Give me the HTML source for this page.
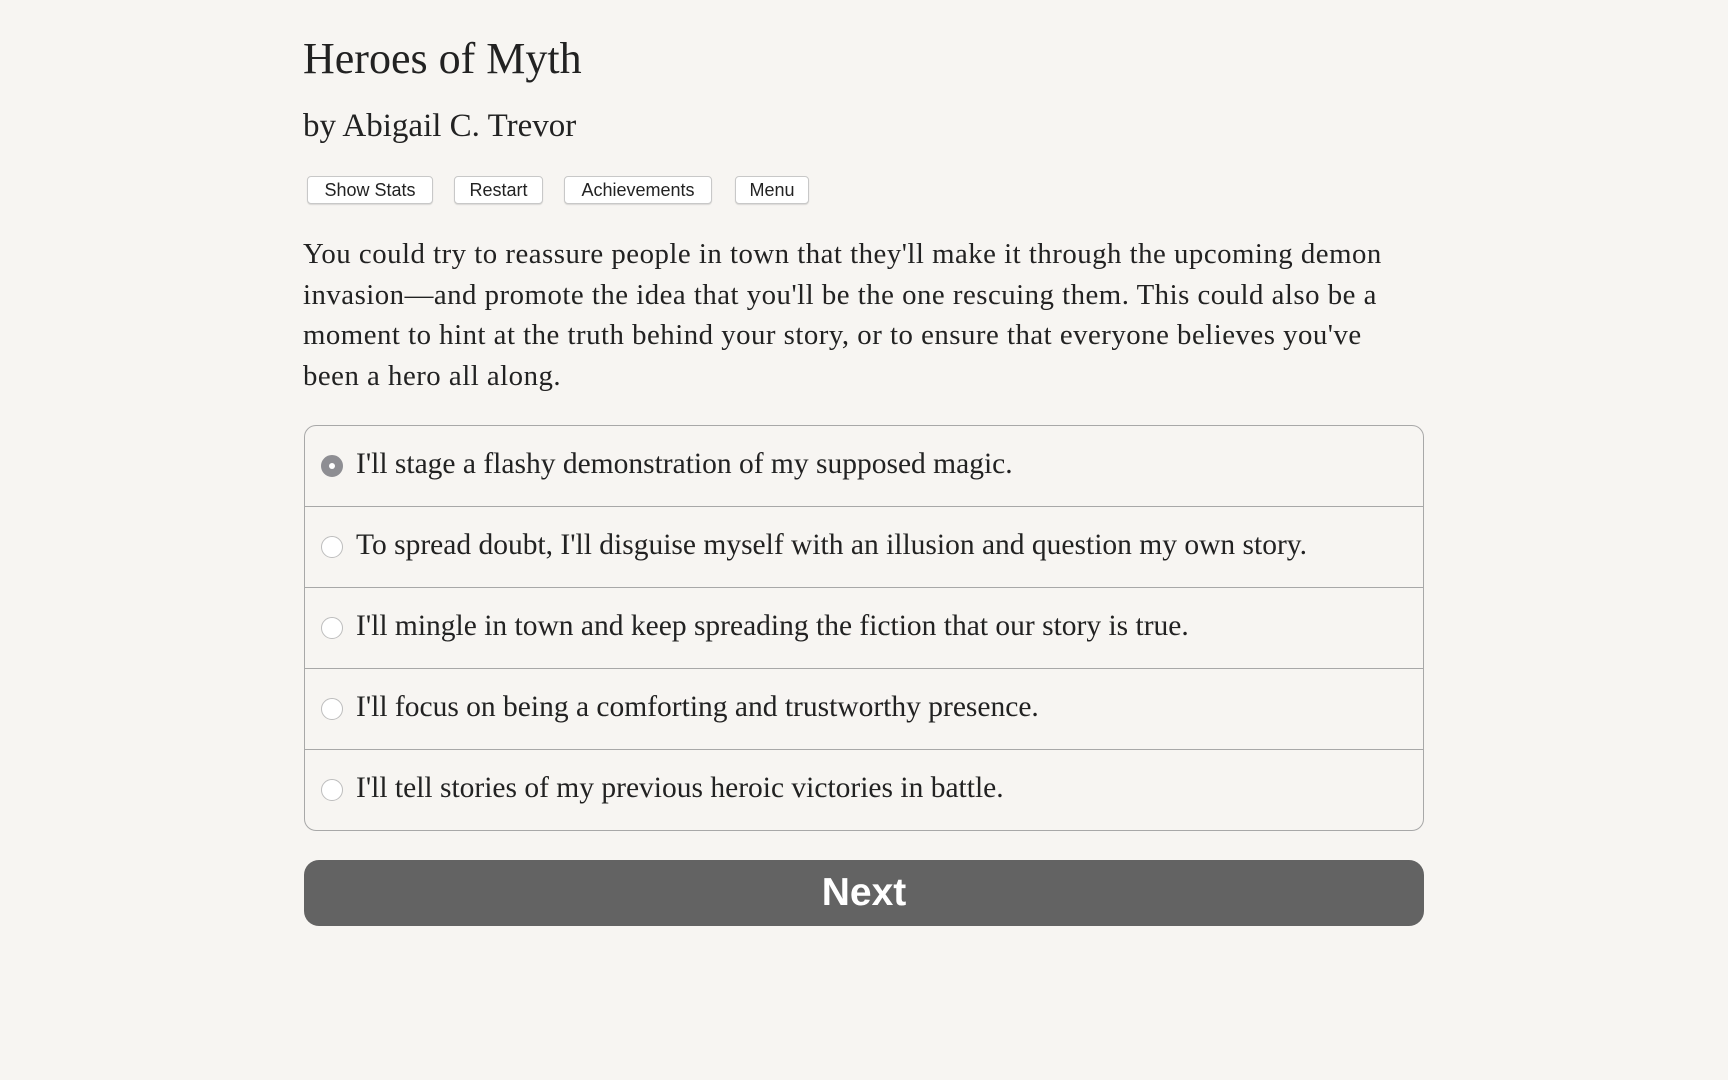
<!DOCTYPE html>
<html><head><meta charset="utf-8"><style>
body{margin:0;background:#f7f5f2;color:#222;font-family:"Liberation Serif",serif;}
.w{position:absolute;left:303px;width:1121px;}
h1{position:absolute;left:303px;top:31px;margin:0;font-weight:normal;font-size:44px;line-height:56px;}
.by{position:absolute;left:303px;top:106px;font-size:33px;line-height:40px;}
.btn{position:absolute;top:176px;height:28px;box-sizing:border-box;border:1px solid #c8c8c8;border-radius:4px;background:#fff;font-family:"Liberation Sans",sans-serif;font-size:18px;line-height:26px;text-align:center;box-shadow:0 1px 1px rgba(0,0,0,.12);}
.p{top:234px;font-size:28.8px;line-height:40.5px;width:1110px;letter-spacing:0.5px;}
.box{top:425px;height:406px;box-sizing:border-box;border:1.5px solid #a8a8a8;border-radius:12px;left:304px;width:1120px;}
.row{height:81px;box-sizing:border-box;border-bottom:1.5px solid #a8a8a8;position:relative;font-size:29.5px;line-height:77px;padding-left:51px;}
.row:last-child{border-bottom:none;}
.r{position:absolute;left:16px;top:29px;width:22px;height:22px;border-radius:50%;border:1px solid #bdbdbd;background:#fff;box-sizing:border-box;}
.r.on{background:#8e8e93;border-color:#8e8e93;}
.r.on:after{content:"";position:absolute;left:7px;top:7px;width:6px;height:6px;border-radius:50%;background:#fff;}
.next{position:absolute;left:304px;top:860px;width:1120px;height:66px;background:#636363;border-radius:15px;color:#fff;font-family:"Liberation Sans",sans-serif;font-weight:bold;font-size:39px;line-height:66px;text-align:center;}
</style></head><body>
<h1>Heroes of Myth</h1>
<div class="by">by Abigail C. Trevor</div>
<div class="btn" style="left:307px;width:126px">Show Stats</div>
<div class="btn" style="left:454px;width:89px">Restart</div>
<div class="btn" style="left:564px;width:148px">Achievements</div>
<div class="btn" style="left:735px;width:74px">Menu</div>
<div class="w p">You could try to reassure people in town that they'll make it through the upcoming demon<br>invasion—and promote the idea that you'll be the one rescuing them. This could also be a<br>moment to hint at the truth behind your story, or to ensure that everyone believes you've<br>been a hero all along.</div>
<div class="w box">
<div class="row"><span class="r on"></span>I'll stage a flashy demonstration of my supposed magic.</div>
<div class="row"><span class="r"></span>To spread doubt, I'll disguise myself with an illusion and question my own story.</div>
<div class="row"><span class="r"></span>I'll mingle in town and keep spreading the fiction that our story is true.</div>
<div class="row"><span class="r"></span>I'll focus on being a comforting and trustworthy presence.</div>
<div class="row"><span class="r"></span>I'll tell stories of my previous heroic victories in battle.</div>
</div>
<div class="next">Next</div>
</body></html>
